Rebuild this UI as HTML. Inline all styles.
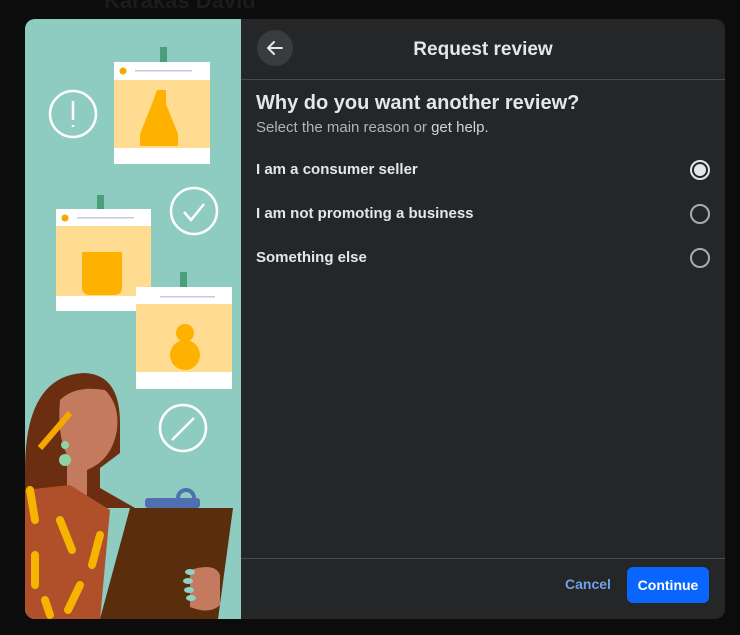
<!DOCTYPE html>
<html><head><style>
body{margin:0;width:740px;height:635px;background:#0c0c0d;overflow:hidden;font-family:"Liberation Sans",sans-serif;position:relative}
.bgtxt{position:absolute;left:104px;top:-12px;color:#1c1c1d;font-weight:bold;font-size:22px}
.modal{position:absolute;left:25px;top:19px;width:700px;height:600px;border-radius:10px;overflow:hidden;background:#252628}
.left{position:absolute;left:0;top:0;width:216px;height:600px;background:#8ecbc1}
.right{position:absolute;left:216px;top:0;width:484px;height:600px;color:#e4e6eb}
.back{position:absolute;left:16px;top:11px;width:36px;height:36px;border-radius:50%;background:#3a3b3c}
.title{position:absolute;left:0;width:484px;top:20px;text-align:center;font-size:19px;font-weight:bold}
.hr{position:absolute;left:0;width:484px;height:1px;background:#4a4b4d}
.h{position:absolute;left:15px;top:73px;font-size:20px;font-weight:bold}
.sub{position:absolute;left:15px;top:100px;font-size:15px;color:#b0b3b8}
.sub b{color:#d0d3d8;font-weight:normal}
.opt{position:absolute;left:15px;font-size:15px;font-weight:bold;color:#e4e6eb}
.rad{position:absolute;left:449px;width:16px;height:16px;border:2px solid #a8abaf;border-radius:50%}
.cancel{position:absolute;left:324px;top:557px;font-size:14px;font-weight:bold;color:#6ea2e8}
.cont{position:absolute;left:386px;top:548px;width:82px;height:36px;border-radius:6px;background:#0866ff;color:#fff;font-weight:bold;font-size:14px;text-align:center;line-height:36px}
</style></head><body>
<div class="bgtxt">Karakas David</div>
<div class="modal">
<div class="left">
<svg width="216" height="600" viewBox="25 19 216 600">
<g fill="none" stroke="#fff" stroke-width="2.5">
<circle cx="73" cy="114" r="23"/><path d="M73 101v19M73 125v2"/>
<circle cx="194" cy="211" r="23"/><path d="M184 212l7 8 13-16"/>
<circle cx="183" cy="428" r="23"/><path d="M172 440l22-22"/>
</g>
<rect x="160" y="47" width="7" height="20" fill="#4a9e7a"/>
<rect x="114" y="62" width="96" height="102" fill="#fff"/><rect x="114" y="80" width="96" height="68" fill="#ffdc92"/>
<circle cx="123" cy="71" r="3.5" fill="#f5a800"/><rect x="135" y="70" width="57" height="1.5" fill="#c8c8e0"/>
<path d="M157 90h9v14l12 30v12h-38v-12l12-30z" fill="#ffb100"/>
<rect x="97" y="195" width="7" height="20" fill="#4a9e7a"/>
<rect x="56" y="209" width="95" height="102" fill="#fff"/><rect x="56" y="226" width="95" height="70" fill="#ffdc92"/>
<circle cx="65" cy="218" r="3.5" fill="#f5a800"/><rect x="77" y="217" width="57" height="1.5" fill="#c8c8e0"/>
<path d="M82 252h40v35q0 8-8 8h-24q-8 0-8-8z" fill="#ffb100"/>
<rect x="180" y="272" width="7" height="20" fill="#4a9e7a"/>
<rect x="136" y="287" width="96" height="102" fill="#fff"/><rect x="136" y="304" width="96" height="68" fill="#ffdc92"/>
<rect x="160" y="296" width="55" height="1.5" fill="#c8c8e0"/>
<circle cx="185" cy="333" r="9" fill="#ffb100"/><circle cx="185" cy="355" r="15" fill="#ffb100"/>
<path d="M25 470q0-95 60-97q35 2 35 50v30l-20 15v20l35 20H25z" fill="#6b2e10"/>
<path d="M60 400q15-15 45-10q15 15 12 40q-5 30-30 40v25h-20v-40q-10-20-7-55z" fill="#c47a5e"/>
<circle cx="65" cy="460" r="6" fill="#8ed3a8"/><circle cx="65" cy="445" r="4" fill="#8ed3a8"/>
<path d="M40 448l30-35" stroke="#f5a800" stroke-width="6"/>
<path d="M25 490l45-5 40 25-10 110H25z" fill="#b0502a"/>
<g stroke="#f5b400" stroke-width="8" stroke-linecap="round"><path d="M30 490l5 30M60 520l12 30M35 555l0 30M100 535l-8 30M80 585l-12 25M45 600l5 15"/></g>
<rect x="145" y="498" width="55" height="10" rx="3" fill="#4f6fb0"/><circle cx="186" cy="498" r="8" fill="none" stroke="#4f6fb0" stroke-width="4"/>
<path d="M130 508h103l-15 111H100z" fill="#5a2d0c"/>
<path d="M190 570q25-8 30 5v30q-10 10-30 2z" fill="#c47a5e"/>
<g fill="#8ed3c8"><ellipse cx="190" cy="572" rx="5" ry="3"/><ellipse cx="188" cy="581" rx="5" ry="3"/><ellipse cx="189" cy="590" rx="5" ry="3"/><ellipse cx="191" cy="598" rx="5" ry="3"/></g>
</svg>
</div>
<div class="right">
<div class="back"><svg width="36" height="36"><path d="M25 18H11M17 12l-6 6 6 6" fill="none" stroke="#e4e6eb" stroke-width="2" stroke-linecap="round" stroke-linejoin="round"/></svg></div>
<div class="title">Request review</div>
<div class="hr" style="top:60px"></div>
<div class="h">Why do you want another review?</div>
<div class="sub">Select the main reason or <b>get help.</b></div>
<div class="opt" style="top:142px">I am a consumer seller</div>
<div class="rad" style="top:141px;border-color:#e4e6eb"><div style="margin:2px;width:12px;height:12px;border-radius:50%;background:#e4e6eb"></div></div>
<div class="opt" style="top:186px">I am not promoting a business</div>
<div class="rad" style="top:185px"></div>
<div class="opt" style="top:230px">Something else</div>
<div class="rad" style="top:229px"></div>
<div class="hr" style="top:539px"></div>
<div class="cancel">Cancel</div>
<div class="cont">Continue</div>
</div>
</div>
</body></html>
